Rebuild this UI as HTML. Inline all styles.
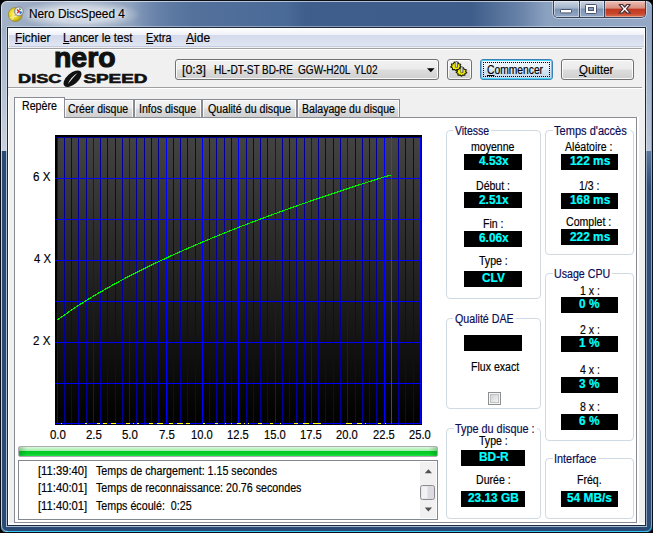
<!DOCTYPE html>
<html lang="fr"><head><meta charset="utf-8"><title>Nero DiscSpeed 4</title>
<style>
html,body{margin:0;padding:0;}
body{width:653px;height:533px;overflow:hidden;background:#000;font-family:"Liberation Sans",sans-serif;position:relative;}
.t{position:absolute;white-space:pre;font-family:"Liberation Sans",sans-serif;-webkit-text-stroke:0.18px currentColor;}
.abs{position:absolute;}
u{text-decoration:underline;text-underline-offset:1px;}
.gb{position:absolute;border:1px solid #d0dae2;border-radius:4px;box-sizing:border-box;}
.gm{position:absolute;background:#fff;height:3px;}
.bb{position:absolute;background:#000;box-sizing:border-box;}
.btn{position:absolute;box-sizing:border-box;border:1px solid #707070;border-radius:3px;background:linear-gradient(#f2f2f2 0%,#ebebeb 48%,#dddddd 52%,#cfcfcf 100%);box-shadow:inset 0 0 0 1px rgba(255,255,255,.85);}
.tab{position:absolute;box-sizing:border-box;border:1px solid #898c95;border-bottom:none;background:linear-gradient(#f2f2f2 0%,#ebebeb 48%,#dddddd 52%,#cfcfcf 100%);box-shadow:inset 1px 1px 0 rgba(255,255,255,.8),inset -1px 0 0 rgba(255,255,255,.8);}
</style></head><body>

<div class="abs" id="frame" style="left:0;top:0;width:653px;height:533px;border-radius:7px 7px 6px 6px;box-sizing:border-box;border:1px solid #0a0e16;overflow:hidden;
background:
linear-gradient(90deg,#a3b3c9 0px,#9aabc3 25px,#94a6c0 118px,#8fa3bf 130px,#7890b3 142px,#6882aa 155px,#5c79a2 172px,#54719c 192px,#4a6a97 285px,#3f5e8b 305px,#3e5d8a 470px,#6983a9 520px,#8ba1c0 545px,#95a9c6 653px);">
<div class="abs" style="left:16px;top:-2px;width:124px;height:30px;background:radial-gradient(ellipse 50% 50% at 50% 52%,rgba(255,255,255,.62) 0%,rgba(255,255,255,.5) 55%,rgba(255,255,255,.22) 80%,rgba(255,255,255,0) 100%);"></div>
<div class="abs" style="left:0;top:0;width:651px;height:531px;box-sizing:border-box;border:1px solid rgba(255,255,255,.6);border-radius:6px;"></div>
</div>
<div style="position:absolute;left:1px;top:28px;width:6px;height:123px;background:linear-gradient(#9fb1ca,#c8d1de);"></div>
<div style="position:absolute;left:1px;top:151px;width:6px;height:376px;background:#2b4a73;"></div>
<div style="position:absolute;left:1px;top:28px;width:1px;height:123px;background:rgba(255,255,255,.5);"></div>
<div style="position:absolute;left:1px;top:151px;width:1px;height:376px;background:#c4cfdd;"></div>
<div style="position:absolute;left:6px;top:27px;width:1px;height:124px;background:rgba(255,255,255,.35);"></div>
<div style="position:absolute;left:6px;top:151px;width:1px;height:376px;background:#a9b9cf;"></div>
<div style="position:absolute;left:646px;top:28px;width:6px;height:123px;background:linear-gradient(#93a8c5,#b9c6d8);"></div>
<div style="position:absolute;left:646px;top:151px;width:6px;height:376px;background:linear-gradient(#5a7aa0,#2d4c77 36px);"></div>
<div style="position:absolute;left:646px;top:27px;width:1px;height:124px;background:rgba(255,255,255,.4);"></div>
<div style="position:absolute;left:646px;top:151px;width:1px;height:376px;background:#8da2bd;"></div>
<div style="position:absolute;left:651px;top:5px;width:1px;height:523px;background:#35c4f2;"></div>
<div style="position:absolute;left:1px;top:526px;width:651px;height:6px;background:#2b4a73;border-radius:0 0 5px 5px;"></div>
<div style="position:absolute;left:6px;top:526px;width:641px;height:1px;background:#a9b9cf;"></div>
<div style="position:absolute;left:5px;top:531px;width:643px;height:1px;background:#35c4f2;"></div>
<svg class="abs" style="left:0;top:523px" width="653" height="10" viewBox="0 523 653 10"><path d="M1.5 525 Q1.5 531.5 8 531.5" fill="none" stroke="#8ccfe8" stroke-width="1"/><path d="M651.5 525 Q651.5 531.5 645 531.5" fill="none" stroke="#35c4f2" stroke-width="1"/></svg>
<div style="position:absolute;left:7px;top:26px;width:639px;height:1px;background:rgba(255,255,255,.38);"></div>
<div style="position:absolute;left:7px;top:27px;width:639px;height:499px;background:#f0f0f0;box-sizing:border-box;border:1px solid #1c2a3e;"></div>
<div style="position:absolute;left:8px;top:96px;width:1px;height:429px;background:#fff;"></div>
<div style="position:absolute;left:8px;top:523px;width:637px;height:2px;background:#fff;"></div>
<div style="position:absolute;left:637px;top:117px;width:2px;height:408px;background:#fff;"></div>
<svg class="abs" style="left:8px;top:5px" width="17" height="17" viewBox="0 0 17 17">
<defs><radialGradient id="g1" cx="40%" cy="45%" r="60%"><stop offset="0" stop-color="#fff27a"/><stop offset=".55" stop-color="#ead51f"/><stop offset="1" stop-color="#b39c14"/></radialGradient></defs>
<circle cx="7.3" cy="9.5" r="6.9" fill="url(#g1)" stroke="#8f7f1c" stroke-width=".7"/>
<path d="M7.3 9.5 L1.5 12.5 A6.6 6.6 0 0 0 5 15.6 Z" fill="#fff8b8" opacity=".55"/>
<circle cx="7.1" cy="10.2" r="2.1" fill="#f6eeb4" opacity=".8"/>
<circle cx="7.1" cy="10.2" r=".8" fill="#c9b84a"/>
<circle cx="10.9" cy="6.4" r="4.5" fill="#cfcfd6" stroke="#7b7b86" stroke-width=".8"/>
<circle cx="10.9" cy="6.4" r="3.1" fill="#fff"/>
<path d="M9 4.6 L10.9 6.2 L9.2 8.2" stroke="#e03020" stroke-width="1.5" fill="none"/>
<path d="M11.1 6.6 L13.1 7.4 L11.9 8.8" stroke="#2a70d0" stroke-width="1.6" fill="none"/>
<path d="M10.9 3.9 L12.9 4.7" stroke="#30a040" stroke-width="1.3" fill="none"/>
</svg>
<div class="t" style="left:29.22px;top:5.50px;font-size:12px;line-height:16px;color:#000;transform:scaleX(0.9841);transform-origin:0 0;text-shadow:0 0 4px rgba(255,255,255,.8),0 0 8px rgba(255,255,255,.6);">Nero DiscSpeed 4</div>
<div class="abs" style="left:553px;top:1px;width:93px;height:17px;box-sizing:border-box;border:1px solid #36445e;border-top:none;border-radius:0 0 5px 5px;overflow:hidden;box-shadow:0 0 0 1px rgba(255,255,255,.45);">
<div class="abs" style="left:0;top:0;width:25px;height:16px;background:linear-gradient(#ccd6e3 0%,#a3b4cb 45%,#7d94b4 50%,#93a8c4 100%);box-shadow:inset 0 0 0 1px rgba(255,255,255,.45);"></div>
<div class="abs" style="left:25px;top:0;width:1px;height:16px;background:#36445e;"></div>
<div class="abs" style="left:26px;top:0;width:24px;height:16px;background:linear-gradient(#ccd6e3 0%,#a3b4cb 45%,#7d94b4 50%,#93a8c4 100%);box-shadow:inset 0 0 0 1px rgba(255,255,255,.45);"></div>
<div class="abs" style="left:50px;top:0;width:1px;height:16px;background:#36445e;"></div>
<div class="abs" style="left:51px;top:0;width:41px;height:16px;background:linear-gradient(#ebc0b6 0%,#d98f80 44%,#c03a22 52%,#c8452c 78%,#db7252 100%);box-shadow:inset 0 0 0 1px rgba(255,255,255,.35);"></div>
</div>
<div style="position:absolute;left:548px;top:0px;width:99px;height:1px;background:#0a0e16;"></div>
<svg class="abs" style="left:553px;top:0" width="93" height="18" viewBox="0 0 93 18">
<rect x="7.5" y="9.5" width="11" height="3.4" rx=".6" fill="#fff" stroke="#4a5670" stroke-width="1"/>
<rect x="32.5" y="4.5" width="11" height="9" rx=".8" fill="#fff" stroke="#4a5670" stroke-width="1"/>
<rect x="35.5" y="7.5" width="5" height="3" fill="#8a9dba" stroke="#4a5670" stroke-width="1"/>
<path d="M66.2 4.5 L69.5 4.5 L71.7 7 L73.9 4.5 L77.2 4.5 L73.5 8.8 L77.4 13.2 L74 13.2 L71.7 10.6 L69.4 13.2 L66 13.2 L69.9 8.8 Z" fill="#fff" stroke="#4a3238" stroke-width="1.2" stroke-linejoin="round"/>
</svg>
<div style="position:absolute;left:8px;top:28px;width:637px;height:7px;background:linear-gradient(#ffffff,#eef1f8);"></div>
<div style="position:absolute;left:8px;top:35px;width:637px;height:11px;background:linear-gradient(#d4d9eb,#e0e5f3);"></div>
<div style="position:absolute;left:8px;top:46px;width:637px;height:1px;background:#c5cbe0;"></div>
<div style="position:absolute;left:644px;top:28px;width:1px;height:19px;background:#fff;"></div>
<div style="position:absolute;left:8px;top:28px;width:1px;height:19px;background:#fff;"></div>
<div class="t" style="left:14.62px;top:29.70px;font-size:12px;line-height:16px;color:#000;transform:scaleX(0.9842);transform-origin:0 0;"><u>F</u>ichier</div>
<div class="t" style="left:63.44px;top:29.70px;font-size:12px;line-height:16px;color:#000;transform:scaleX(0.9648);transform-origin:0 0;"><u>L</u>ancer le test</div>
<div class="t" style="left:146.19px;top:29.70px;font-size:12px;line-height:16px;color:#000;transform:scaleX(0.9111);transform-origin:0 0;"><u>E</u>xtra</div>
<div class="t" style="left:186.30px;top:29.70px;font-size:12px;line-height:16px;color:#000;transform:scaleX(1.0043);transform-origin:0 0;"><u>A</u>ide</div>
<div style="position:absolute;left:8px;top:48px;width:634px;height:1px;background:#a0a0a0;"></div>
<div style="position:absolute;left:8px;top:49px;width:635px;height:1px;background:#fff;"></div>
<div style="position:absolute;left:8px;top:87px;width:634px;height:1px;background:#a0a0a0;"></div>
<div style="position:absolute;left:8px;top:88px;width:635px;height:1px;background:#fff;"></div>
<svg class="abs" style="left:14px;top:49px" width="140" height="40" viewBox="14 49 140 40">
<text x="54.0" y="67.3" font-family="Liberation Sans, sans-serif" font-weight="bold" font-size="27.6" textLength="61.6" lengthAdjust="spacingAndGlyphs" fill="#111" stroke="#111" stroke-width="1.1">nero</text>
<text x="18.1" y="82.6" font-family="Liberation Sans, sans-serif" font-weight="bold" font-size="12" textLength="43.2" lengthAdjust="spacingAndGlyphs" fill="#111" stroke="#111" stroke-width=".55">DISC</text>
<text x="83.4" y="82.6" font-family="Liberation Sans, sans-serif" font-weight="bold" font-size="12" textLength="64" lengthAdjust="spacingAndGlyphs" fill="#111" stroke="#111" stroke-width=".55">SPEED</text>
<g transform="translate(72.5,78.7) rotate(-41)"><ellipse cx="0" cy="0" rx="10.8" ry="5.6" fill="#111"/><path d="M-7 1.0 Q0 -2.4 7.5 -0.9 Q0 -0.2 -7 1.0 Z" fill="#f0f0f0"/></g>
</svg>
<div class="btn" style="left:175px;top:59px;width:264px;height:21px;"></div>
<div class="t" style="left:181.50px;top:61.70px;font-size:12px;line-height:16px;color:#000;transform:scaleX(1.0266);transform-origin:0 0;">[0:3]</div>
<div class="t" style="left:213.85px;top:61.70px;font-size:12px;line-height:16px;color:#000;transform:scaleX(0.8474);transform-origin:0 0;">HL-DT-ST</div>
<div class="t" style="left:261.97px;top:61.70px;font-size:12px;line-height:16px;color:#000;transform:scaleX(0.8279);transform-origin:0 0;">BD-RE</div>
<div class="t" style="left:298.18px;top:61.70px;font-size:12px;line-height:16px;color:#000;transform:scaleX(0.8375);transform-origin:0 0;">GGW-H20L</div>
<div class="t" style="left:353.59px;top:61.70px;font-size:12px;line-height:16px;color:#000;transform:scaleX(0.8404);transform-origin:0 0;">YL02</div>
<svg class="abs" style="left:426px;top:67px" width="10" height="6" viewBox="0 0 10 6"><path d="M1 1.2 L8.6 1.2 L4.8 5.2 Z" fill="#000"/></svg>
<div class="btn" style="left:447px;top:59px;width:25px;height:21px;"></div>
<svg class="abs" style="left:447px;top:59px" width="25" height="21" viewBox="447 59 25 21"><polygon points="461.29,67.18 459.45,68.04 459.36,69.77 457.29,69.46 455.86,70.74 454.52,69.40 452.42,69.63 452.44,67.89 450.66,66.96 452.03,65.64 451.39,63.98 453.48,63.70 454.28,62.09 456.10,62.97 457.98,62.17 458.68,63.80 460.74,64.18 460.01,65.81" fill="#f2ee00" stroke="#151500" stroke-width="1.05" stroke-linejoin="round"/><path d="M455.3 62.2 L456.40000000000003 61.0 L457.5 62.2 L457.5 67.2 L455.3 67.2 Z" fill="#b9b9bd" stroke="#3a3a3a" stroke-width=".7"/><rect x="455.8" y="62.2" width=".7" height="4.8" fill="#ececec"/><polygon points="466.79,72.68 464.95,73.54 464.86,75.27 462.79,74.96 461.36,76.24 460.02,74.90 457.92,75.13 457.94,73.39 456.16,72.46 457.53,71.14 456.89,69.48 458.98,69.20 459.78,67.59 461.60,68.47 463.48,67.67 464.18,69.30 466.24,69.68 465.51,71.31" fill="#f2ee00" stroke="#151500" stroke-width="1.05" stroke-linejoin="round"/><path d="M460.8 67.60000000000001 L461.90000000000003 66.4 L463.0 67.60000000000001 L463.0 72.60000000000001 L460.8 72.60000000000001 Z" fill="#b9b9bd" stroke="#3a3a3a" stroke-width=".7"/><rect x="461.3" y="67.60000000000001" width=".7" height="4.8" fill="#ececec"/></svg>
<div class="btn" style="left:480px;top:59px;width:73px;height:21px;border-color:#3c7fb1;background:linear-gradient(#f2f7fb 0%,#e6f0f8 48%,#d3e4f2 52%,#c4d9ec 100%);box-shadow:inset 0 0 0 1px #48d8fb;"><div class="abs" style="left:2px;top:2px;right:2px;bottom:2px;border:1px dotted #000;"></div></div>
<div class="t" style="left:487.16px;top:61.90px;font-size:12px;line-height:16px;color:#000;transform:scaleX(0.8574);transform-origin:0 0;"><u>C</u>ommencer</div>
<div class="btn" style="left:561px;top:59px;width:73px;height:21px;"></div>
<div class="t" style="left:578.92px;top:61.90px;font-size:12px;line-height:16px;color:#000;transform:scaleX(0.9532);transform-origin:0 0;"><u>Q</u>uitter</div>
<div style="position:absolute;left:14px;top:117px;width:623px;height:406px;background:#fff;box-sizing:border-box;border:1px solid #898c95;"></div>
<div class="tab" style="left:64px;top:99px;width:70px;height:18px;"></div>
<div class="t" style="left:68.15px;top:100.60px;font-size:12px;line-height:16px;color:#000;transform:scaleX(0.8756);transform-origin:0 0;">Créer disque</div>
<div class="tab" style="left:134px;top:99px;width:68px;height:18px;"></div>
<div class="t" style="left:139.41px;top:100.60px;font-size:12px;line-height:16px;color:#000;transform:scaleX(0.8825);transform-origin:0 0;">Infos disque</div>
<div class="tab" style="left:202px;top:99px;width:95px;height:18px;"></div>
<div class="t" style="left:207.76px;top:100.60px;font-size:12px;line-height:16px;color:#000;transform:scaleX(0.8877);transform-origin:0 0;">Qualité du disque</div>
<div class="tab" style="left:297px;top:99px;width:103px;height:18px;"></div>
<div class="t" style="left:302.22px;top:100.60px;font-size:12px;line-height:16px;color:#000;transform:scaleX(0.8818);transform-origin:0 0;">Balayage du disque</div>
<div class="tab" style="left:14px;top:97px;width:51px;height:21px;background:#fff;box-shadow:none;"></div>
<div class="t" style="left:21.81px;top:98.40px;font-size:12px;line-height:16px;color:#000;transform:scaleX(0.8874);transform-origin:0 0;">Repère</div>
<svg class="abs" style="left:55px;top:135px" width="368" height="290" viewBox="55 135 368 290" shape-rendering="crispEdges"><defs><linearGradient id="cg" x1="0" y1="0" x2="0" y2="1"><stop offset="0" stop-color="#434343"/><stop offset="1" stop-color="#000"/></linearGradient></defs><rect x="55" y="135" width="367" height="290" fill="#000"/><rect x="57" y="137" width="364" height="287" fill="url(#cg)"/><rect x="57" y="137" width="1" height="287" fill="#0000ff"/><rect x="64" y="137" width="1" height="288" fill="#000098"/><rect x="71" y="137" width="1" height="288" fill="#000098"/><rect x="78" y="137" width="1" height="288" fill="#000098"/><rect x="86" y="137" width="1" height="288" fill="#000098"/><rect x="93" y="137" width="1" height="287" fill="#0000ff"/><rect x="100" y="137" width="1" height="288" fill="#000098"/><rect x="107" y="137" width="1" height="288" fill="#000098"/><rect x="115" y="137" width="1" height="288" fill="#000098"/><rect x="122" y="137" width="1" height="288" fill="#000098"/><rect x="129" y="137" width="1" height="287" fill="#0000ff"/><rect x="136" y="137" width="1" height="288" fill="#000098"/><rect x="144" y="137" width="1" height="288" fill="#000098"/><rect x="151" y="137" width="1" height="288" fill="#000098"/><rect x="158" y="137" width="1" height="288" fill="#000098"/><rect x="166" y="137" width="1" height="287" fill="#0000ff"/><rect x="173" y="137" width="1" height="288" fill="#000098"/><rect x="180" y="137" width="1" height="288" fill="#000098"/><rect x="187" y="137" width="1" height="288" fill="#000098"/><rect x="195" y="137" width="1" height="288" fill="#000098"/><rect x="202" y="137" width="1" height="287" fill="#0000ff"/><rect x="209" y="137" width="1" height="288" fill="#000098"/><rect x="216" y="137" width="1" height="288" fill="#000098"/><rect x="224" y="137" width="1" height="288" fill="#000098"/><rect x="231" y="137" width="1" height="288" fill="#000098"/><rect x="238" y="137" width="1" height="287" fill="#0000ff"/><rect x="246" y="137" width="1" height="288" fill="#000098"/><rect x="253" y="137" width="1" height="288" fill="#000098"/><rect x="260" y="137" width="1" height="288" fill="#000098"/><rect x="267" y="137" width="1" height="288" fill="#000098"/><rect x="275" y="137" width="1" height="287" fill="#0000ff"/><rect x="282" y="137" width="1" height="288" fill="#000098"/><rect x="289" y="137" width="1" height="288" fill="#000098"/><rect x="296" y="137" width="1" height="288" fill="#000098"/><rect x="304" y="137" width="1" height="288" fill="#000098"/><rect x="311" y="137" width="1" height="287" fill="#0000ff"/><rect x="318" y="137" width="1" height="288" fill="#000098"/><rect x="325" y="137" width="1" height="288" fill="#000098"/><rect x="333" y="137" width="1" height="288" fill="#000098"/><rect x="340" y="137" width="1" height="288" fill="#000098"/><rect x="347" y="137" width="1" height="287" fill="#0000ff"/><rect x="355" y="137" width="1" height="288" fill="#000098"/><rect x="362" y="137" width="1" height="288" fill="#000098"/><rect x="369" y="137" width="1" height="288" fill="#000098"/><rect x="376" y="137" width="1" height="288" fill="#000098"/><rect x="384" y="137" width="1" height="287" fill="#0000ff"/><rect x="398" y="137" width="1" height="288" fill="#000098"/><rect x="405" y="137" width="1" height="288" fill="#000098"/><rect x="413" y="137" width="1" height="288" fill="#000098"/><rect x="420" y="137" width="1" height="287" fill="#0000ff"/><rect x="55" y="423" width="367" height="1" fill="#0000ff"/><rect x="55" y="383" width="367" height="1" fill="#0000ff"/><rect x="55" y="342" width="367" height="1" fill="#0000ff"/><rect x="55" y="301" width="367" height="1" fill="#0000ff"/><rect x="55" y="260" width="367" height="1" fill="#0000ff"/><rect x="55" y="219" width="367" height="1" fill="#0000ff"/><rect x="55" y="178" width="367" height="1" fill="#0000ff"/><rect x="55" y="137" width="367" height="1" fill="#000098"/><rect x="61" y="423" width="1" height="1" fill="#ffff00"/><rect x="85" y="423" width="2" height="1" fill="#ffff00"/><rect x="97" y="423" width="3" height="1" fill="#ffff00"/><rect x="103" y="423" width="4" height="1" fill="#ffff00"/><rect x="111" y="423" width="5" height="1" fill="#ffff00"/><rect x="126" y="423" width="4" height="1" fill="#ffff00"/><rect x="133" y="423" width="1" height="1" fill="#ffff00"/><rect x="137" y="423" width="2" height="1" fill="#ffff00"/><rect x="149" y="423" width="4" height="1" fill="#ffff00"/><rect x="157" y="423" width="6" height="1" fill="#ffff00"/><rect x="169" y="423" width="4" height="1" fill="#ffff00"/><rect x="177" y="423" width="6" height="1" fill="#ffff00"/><rect x="186" y="423" width="4" height="1" fill="#ffff00"/><rect x="203" y="423" width="2" height="1" fill="#ffff00"/><rect x="215" y="423" width="3" height="1" fill="#ffff00"/><rect x="225" y="423" width="1" height="1" fill="#ffff00"/><rect x="231" y="423" width="1" height="1" fill="#ffff00"/><rect x="237" y="423" width="4" height="1" fill="#ffff00"/><rect x="244" y="423" width="1" height="1" fill="#ffff00"/><rect x="248" y="423" width="1" height="1" fill="#ffff00"/><rect x="258" y="423" width="4" height="1" fill="#ffff00"/><rect x="270" y="423" width="3" height="1" fill="#ffff00"/><rect x="280" y="423" width="1" height="1" fill="#ffff00"/><rect x="294" y="423" width="4" height="1" fill="#ffff00"/><rect x="303" y="423" width="6" height="1" fill="#ffff00"/><rect x="313" y="423" width="8" height="1" fill="#ffff00"/><rect x="346" y="423" width="6" height="1" fill="#ffff00"/><rect x="357" y="423" width="5" height="1" fill="#ffff00"/><rect x="365" y="423" width="1" height="1" fill="#ffff00"/><rect x="378" y="423" width="3" height="1" fill="#ffff00"/><rect x="385" y="423" width="1" height="1" fill="#ffff00"/><rect x="391" y="137" width="1" height="287" fill="#ff0000"/><polyline points="57.4,320.0 58.4,319.3 59.4,318.5 60.4,317.8 61.4,317.1 62.4,316.4 63.4,315.7 64.4,315.0 65.4,314.3 66.4,313.6 67.4,312.9 68.4,312.2 69.4,311.5 70.4,310.8 71.4,310.1 72.4,309.5 73.4,308.8 74.4,308.1 75.4,307.5 76.4,306.8 77.4,306.2 78.4,305.5 79.4,304.9 80.4,304.2 81.4,303.6 82.4,303.0 83.4,302.3 84.4,301.7 85.4,301.1 86.4,300.4 87.4,299.8 88.4,299.2 89.4,298.6 90.4,298.0 91.4,297.4 92.4,296.8 93.4,296.2 94.4,295.6 95.4,295.0 96.4,294.4 97.4,293.8 98.4,293.2 99.4,292.6 100.4,292.0 101.4,291.5 102.4,290.9 103.4,290.3 104.4,289.7 105.4,289.2 106.4,288.6 107.4,288.0 108.4,287.5 109.4,286.9 110.4,286.3 111.4,285.8 112.4,285.2 113.4,284.7 114.4,284.1 115.4,283.6 116.4,283.0 117.4,282.5 118.4,282.0 119.4,281.4 120.4,280.9 121.4,280.3 122.4,279.8 123.4,279.3 124.4,278.7 125.4,278.2 126.4,277.7 127.4,277.2 128.4,276.6 129.4,276.1 130.4,275.6 131.4,275.1 132.4,274.6 133.4,274.1 134.4,273.6 135.4,273.0 136.4,272.5 137.4,272.0 138.4,271.5 139.4,271.0 140.4,270.5 141.4,270.0 142.4,269.5 143.4,269.0 144.4,268.5 145.4,268.0 146.4,267.5 147.4,267.1 148.4,266.6 149.4,266.1 150.4,265.6 151.4,265.1 152.4,264.6 153.4,264.2 154.4,263.7 155.4,263.2 156.4,262.7 157.4,262.2 158.4,261.8 159.4,261.3 160.4,260.8 161.4,260.4 162.4,259.9 163.4,259.4 164.4,259.0 165.4,258.5 166.4,258.0 167.4,257.6 168.4,257.1 169.4,256.6 170.4,256.2 171.4,255.7 172.4,255.3 173.4,254.8 174.4,254.4 175.4,253.9 176.4,253.5 177.4,253.0 178.4,252.6 179.4,252.1 180.4,251.7 181.4,251.2 182.4,250.8 183.4,250.3 184.4,249.9 185.4,249.5 186.4,249.0 187.4,248.6 188.4,248.1 189.4,247.7 190.4,247.3 191.4,246.8 192.4,246.4 193.4,246.0 194.4,245.5 195.4,245.1 196.4,244.7 197.4,244.2 198.4,243.8 199.4,243.4 200.4,243.0 201.4,242.5 202.4,242.1 203.4,241.7 204.4,241.3 205.4,240.9 206.4,240.4 207.4,240.0 208.4,239.6 209.4,239.2 210.4,238.8 211.4,238.4 212.4,237.9 213.4,237.5 214.4,237.1 215.4,236.7 216.4,236.3 217.4,235.9 218.4,235.5 219.4,235.1 220.4,234.7 221.4,234.3 222.4,233.9 223.4,233.5 224.4,233.1 225.4,232.7 226.4,232.3 227.4,231.9 228.4,231.5 229.4,231.1 230.4,230.7 231.4,230.3 232.4,229.9 233.4,229.5 234.4,229.1 235.4,228.7 236.4,228.3 237.4,227.9 238.4,227.5 239.4,227.1 240.4,226.7 241.4,226.3 242.4,225.9 243.4,225.6 244.4,225.2 245.4,224.8 246.4,224.4 247.4,224.0 248.4,223.6 249.4,223.3 250.4,222.9 251.4,222.5 252.4,222.1 253.4,221.7 254.4,221.3 255.4,221.0 256.4,220.6 257.4,220.2 258.4,219.8 259.4,219.5 260.4,219.1 261.4,218.7 262.4,218.3 263.4,218.0 264.4,217.6 265.4,217.2 266.4,216.8 267.4,216.5 268.4,216.1 269.4,215.7 270.4,215.4 271.4,215.0 272.4,214.6 273.4,214.3 274.4,213.9 275.4,213.5 276.4,213.2 277.4,212.8 278.4,212.4 279.4,212.1 280.4,211.7 281.4,211.4 282.4,211.0 283.4,210.6 284.4,210.3 285.4,209.9 286.4,209.6 287.4,209.2 288.4,208.8 289.4,208.5 290.4,208.1 291.4,207.8 292.4,207.4 293.4,207.1 294.4,206.7 295.4,206.4 296.4,206.0 297.4,205.7 298.4,205.3 299.4,204.9 300.4,204.6 301.4,204.2 302.4,203.9 303.4,203.6 304.4,203.2 305.4,202.9 306.4,202.5 307.4,202.2 308.4,201.8 309.4,201.5 310.4,201.1 311.4,200.8 312.4,200.4 313.4,200.1 314.4,199.7 315.4,199.4 316.4,199.1 317.4,198.7 318.4,198.4 319.4,198.0 320.4,197.7 321.4,197.4 322.4,197.0 323.4,196.7 324.4,196.3 325.4,196.0 326.4,195.7 327.4,195.3 328.4,195.0 329.4,194.7 330.4,194.3 331.4,194.0 332.4,193.7 333.4,193.3 334.4,193.0 335.4,192.7 336.4,192.3 337.4,192.0 338.4,191.7 339.4,191.3 340.4,191.0 341.4,190.7 342.4,190.4 343.4,190.0 344.4,189.7 345.4,189.4 346.4,189.0 347.4,188.7 348.4,188.4 349.4,188.1 350.4,187.7 351.4,187.4 352.4,187.1 353.4,186.8 354.4,186.4 355.4,186.1 356.4,185.8 357.4,185.5 358.4,185.1 359.4,184.8 360.4,184.5 361.4,184.2 362.4,183.9 363.4,183.5 364.4,183.2 365.4,182.9 366.4,182.6 367.4,182.3 368.4,181.9 369.4,181.6 370.4,181.3 371.4,181.0 372.4,180.7 373.4,180.4 374.4,180.1 375.4,179.7 376.4,179.4 377.4,179.1 378.4,178.8 379.4,178.5 380.4,178.2 381.4,177.9 382.4,177.5 383.4,177.2 384.4,176.9 385.4,176.6 386.4,176.3 387.4,176.0 388.4,175.7 389.4,175.4 390.4,175.1" fill="none" stroke="#00f000" stroke-width="1.15" shape-rendering="crispEdges"/></svg>
<div class="t" style="left:33.20px;top:169.00px;font-size:12px;line-height:16px;color:#000;transform:scaleX(0.9635);transform-origin:0 0;">6 X</div>
<div class="t" style="left:33.56px;top:251.00px;font-size:12px;line-height:16px;color:#000;transform:scaleX(0.9429);transform-origin:0 0;">4 X</div>
<div class="t" style="left:33.20px;top:333.00px;font-size:12px;line-height:16px;color:#000;transform:scaleX(0.9635);transform-origin:0 0;">2 X</div>
<div class="t" style="left:50.40px;top:427.00px;font-size:12px;line-height:16px;color:#000;transform:scaleX(0.9550);transform-origin:0 0;">0.0</div>
<div class="t" style="left:86.40px;top:427.00px;font-size:12px;line-height:16px;color:#000;transform:scaleX(0.9550);transform-origin:0 0;">2.5</div>
<div class="t" style="left:122.40px;top:427.00px;font-size:12px;line-height:16px;color:#000;transform:scaleX(0.9550);transform-origin:0 0;">5.0</div>
<div class="t" style="left:159.40px;top:427.00px;font-size:12px;line-height:16px;color:#000;transform:scaleX(0.9550);transform-origin:0 0;">7.5</div>
<div class="t" style="left:190.76px;top:427.00px;font-size:12px;line-height:16px;color:#000;transform:scaleX(0.9300);transform-origin:0 0;">10.0</div>
<div class="t" style="left:226.81px;top:427.00px;font-size:12px;line-height:16px;color:#000;transform:scaleX(0.9300);transform-origin:0 0;">12.5</div>
<div class="t" style="left:263.76px;top:427.00px;font-size:12px;line-height:16px;color:#000;transform:scaleX(0.9300);transform-origin:0 0;">15.0</div>
<div class="t" style="left:299.81px;top:427.00px;font-size:12px;line-height:16px;color:#000;transform:scaleX(0.9300);transform-origin:0 0;">17.5</div>
<div class="t" style="left:335.87px;top:427.00px;font-size:12px;line-height:16px;color:#000;transform:scaleX(0.9300);transform-origin:0 0;">20.0</div>
<div class="t" style="left:372.93px;top:427.00px;font-size:12px;line-height:16px;color:#000;transform:scaleX(0.9300);transform-origin:0 0;">22.5</div>
<div class="t" style="left:408.87px;top:427.00px;font-size:12px;line-height:16px;color:#000;transform:scaleX(0.9300);transform-origin:0 0;">25.0</div>
<div style="position:absolute;left:18px;top:446px;width:420px;height:11px;box-sizing:border-box;border:1px solid #b0aab2;border-radius:2px;background:linear-gradient(90deg,rgba(0,80,0,.25) 0px,rgba(0,80,0,0) 8px,rgba(0,80,0,0) 410px,rgba(0,80,0,.25) 418px),linear-gradient(#dbf9db 0px,#a4eeac 3.6px,#02c824 4.2px,#08d02c 7px,#22e044 9px);"></div>
<div style="position:absolute;left:18px;top:460px;width:420px;height:60px;box-sizing:border-box;border:1px solid #828790;background:#fff;"></div>
<div style="position:absolute;left:420px;top:462px;width:16px;height:56px;background:#f1f1f1;"></div>
<svg class="abs" style="left:420px;top:462px" width="16" height="57" viewBox="420 462 16 57"><path d="M424.8 473.2 L428.4 469.2 L432 473.2 Z" fill="#505050"/><path d="M424.8 507.6 L428.4 511.6 L432 507.6 Z" fill="#505050"/><rect x="420.5" y="485.5" width="14" height="14" rx="2" fill="#dcdce0" stroke="#8c8c92"/><rect x="421.5" y="486.5" width="6" height="12" fill="#f2f2f4"/></svg>
<div class="t" style="left:37.58px;top:463.20px;font-size:12px;line-height:16px;color:#000;transform:scaleX(0.9360);transform-origin:0 0;">[11:39:40]</div>
<div class="t" style="left:96.08px;top:463.20px;font-size:12px;line-height:16px;color:#000;transform:scaleX(0.8900);transform-origin:0 0;">Temps de chargement: 1.15 secondes</div>
<div class="t" style="left:37.58px;top:480.35px;font-size:12px;line-height:16px;color:#000;transform:scaleX(0.9360);transform-origin:0 0;">[11:40:01]</div>
<div class="t" style="left:96.08px;top:480.35px;font-size:12px;line-height:16px;color:#000;transform:scaleX(0.8900);transform-origin:0 0;">Temps de reconnaissance: 20.76 secondes</div>
<div class="t" style="left:37.58px;top:497.50px;font-size:12px;line-height:16px;color:#000;transform:scaleX(0.9360);transform-origin:0 0;">[11:40:01]</div>
<div class="t" style="left:96.08px;top:497.50px;font-size:12px;line-height:16px;color:#000;transform:scaleX(0.8900);transform-origin:0 0;">Temps écoulé:  0:25</div>
<div class="gb" style="left:446px;top:130px;width:95px;height:169px;"></div>
<div class="gm" style="left:452.7px;top:129px;width:38.6px;"></div>
<div class="t" style="left:454.59px;top:123.10px;font-size:12px;line-height:16px;color:#0c0c54;transform:scaleX(0.8727);transform-origin:0 0;">Vitesse</div>
<div class="t" style="left:470.88px;top:139.00px;font-size:12px;line-height:16px;color:#000;transform:scaleX(0.8800);transform-origin:0 0;">moyenne</div>
<div class="bb" style="left:464.2px;top:153.6px;width:58px;height:16.2px;"></div>
<div class="t" style="left:478.54px;top:153.20px;font-size:12px;line-height:16px;color:#00ffff;transform:scaleX(0.9900);transform-origin:0 0;font-weight:bold;">4.53x</div>
<div class="t" style="left:476.48px;top:178.20px;font-size:12px;line-height:16px;color:#000;transform:scaleX(0.8800);transform-origin:0 0;">Début :</div>
<div class="bb" style="left:464.2px;top:192.3px;width:58px;height:16.2px;"></div>
<div class="t" style="left:478.54px;top:191.90px;font-size:12px;line-height:16px;color:#00ffff;transform:scaleX(0.9900);transform-origin:0 0;font-weight:bold;">2.51x</div>
<div class="t" style="left:482.73px;top:216.10px;font-size:12px;line-height:16px;color:#000;transform:scaleX(0.8800);transform-origin:0 0;">Fin :</div>
<div class="bb" style="left:464.2px;top:230.5px;width:58px;height:16.2px;"></div>
<div class="t" style="left:478.54px;top:230.10px;font-size:12px;line-height:16px;color:#00ffff;transform:scaleX(0.9900);transform-origin:0 0;font-weight:bold;">6.06x</div>
<div class="t" style="left:478.62px;top:253.00px;font-size:12px;line-height:16px;color:#000;transform:scaleX(0.8800);transform-origin:0 0;">Type :</div>
<div class="bb" style="left:464.2px;top:270.5px;width:58px;height:16.2px;"></div>
<div class="t" style="left:481.96px;top:270.10px;font-size:12px;line-height:16px;color:#00ffff;transform:scaleX(0.9900);transform-origin:0 0;font-weight:bold;">CLV</div>
<div class="gb" style="left:545px;top:130px;width:89px;height:125px;"></div>
<div class="gm" style="left:552.6px;top:129px;width:77.2px;"></div>
<div class="t" style="left:554.37px;top:123.10px;font-size:12px;line-height:16px;color:#0c0c54;transform:scaleX(0.9212);transform-origin:0 0;">Temps d'accès</div>
<div class="t" style="left:564.73px;top:139.00px;font-size:12px;line-height:16px;color:#000;transform:scaleX(0.8800);transform-origin:0 0;">Aléatoire :</div>
<div class="bb" style="left:560.8px;top:153.5px;width:57.3px;height:16.2px;"></div>
<div class="t" style="left:569.50px;top:153.10px;font-size:12px;line-height:16px;color:#00ffff;transform:scaleX(0.9900);transform-origin:0 0;font-weight:bold;">122 ms</div>
<div class="t" style="left:579.33px;top:178.20px;font-size:12px;line-height:16px;color:#000;transform:scaleX(0.8800);transform-origin:0 0;">1/3 :</div>
<div class="bb" style="left:560.8px;top:192.6px;width:57.3px;height:16.2px;"></div>
<div class="t" style="left:569.50px;top:192.20px;font-size:12px;line-height:16px;color:#00ffff;transform:scaleX(0.9900);transform-origin:0 0;font-weight:bold;">168 ms</div>
<div class="t" style="left:565.81px;top:214.00px;font-size:12px;line-height:16px;color:#000;transform:scaleX(0.8800);transform-origin:0 0;">Complet :</div>
<div class="bb" style="left:560.8px;top:228.9px;width:57.3px;height:16.2px;"></div>
<div class="t" style="left:569.50px;top:228.50px;font-size:12px;line-height:16px;color:#00ffff;transform:scaleX(0.9900);transform-origin:0 0;font-weight:bold;">222 ms</div>
<div class="gb" style="left:545px;top:273px;width:89px;height:168px;"></div>
<div class="gm" style="left:552.6px;top:272px;width:59.7px;"></div>
<div class="t" style="left:553.82px;top:266.10px;font-size:12px;line-height:16px;color:#0c0c54;transform:scaleX(0.8876);transform-origin:0 0;">Usage CPU</div>
<div class="t" style="left:579.62px;top:282.50px;font-size:12px;line-height:16px;color:#000;transform:scaleX(0.8800);transform-origin:0 0;">1 x :</div>
<div class="bb" style="left:560.8px;top:296.6px;width:57.3px;height:16.2px;"></div>
<div class="t" style="left:579.41px;top:296.20px;font-size:12px;line-height:16px;color:#00ffff;transform:scaleX(0.9900);transform-origin:0 0;font-weight:bold;">0 %</div>
<div class="t" style="left:579.62px;top:321.50px;font-size:12px;line-height:16px;color:#000;transform:scaleX(0.8800);transform-origin:0 0;">2 x :</div>
<div class="bb" style="left:560.8px;top:335.8px;width:57.3px;height:16.2px;"></div>
<div class="t" style="left:579.41px;top:335.40px;font-size:12px;line-height:16px;color:#00ffff;transform:scaleX(0.9900);transform-origin:0 0;font-weight:bold;">1 %</div>
<div class="t" style="left:579.62px;top:362.20px;font-size:12px;line-height:16px;color:#000;transform:scaleX(0.8800);transform-origin:0 0;">4 x :</div>
<div class="bb" style="left:560.8px;top:376.7px;width:57.3px;height:16.2px;"></div>
<div class="t" style="left:579.41px;top:376.30px;font-size:12px;line-height:16px;color:#00ffff;transform:scaleX(0.9900);transform-origin:0 0;font-weight:bold;">3 %</div>
<div class="t" style="left:579.62px;top:399.10px;font-size:12px;line-height:16px;color:#000;transform:scaleX(0.8800);transform-origin:0 0;">8 x :</div>
<div class="bb" style="left:560.8px;top:413.6px;width:57.3px;height:16.2px;"></div>
<div class="t" style="left:579.41px;top:413.20px;font-size:12px;line-height:16px;color:#00ffff;transform:scaleX(0.9900);transform-origin:0 0;font-weight:bold;">6 %</div>
<div class="gb" style="left:446px;top:318px;width:95px;height:91px;"></div>
<div class="gm" style="left:453.0px;top:317px;width:62.8px;"></div>
<div class="t" style="left:454.56px;top:311.10px;font-size:12px;line-height:16px;color:#0c0c54;transform:scaleX(0.8892);transform-origin:0 0;">Qualité DAE</div>
<div class="bb" style="left:464.4px;top:334.7px;width:57.7px;height:16.2px;"></div>
<div class="t" style="left:470.74px;top:359.40px;font-size:12px;line-height:16px;color:#000;transform:scaleX(0.8800);transform-origin:0 0;">Flux exact</div>
<div style="position:absolute;left:488px;top:392px;width:13px;height:13px;box-sizing:border-box;border:1px solid #8e8f8f;background:#f4f4f4;box-shadow:inset 0 0 0 1px #f4f4f4,inset 0 0 0 2px #c0c4c8;"><div class="abs" style="left:2px;top:2px;width:7px;height:7px;background:linear-gradient(135deg,#d2d4d6,#f2f2f2);"></div></div>
<div class="gb" style="left:446px;top:428px;width:95px;height:91px;"></div>
<div class="gm" style="left:453.6px;top:427px;width:83.4px;"></div>
<div class="t" style="left:455.37px;top:421.10px;font-size:12px;line-height:16px;color:#0c0c54;transform:scaleX(0.9037);transform-origin:0 0;">Type du disque :</div>
<div class="t" style="left:478.62px;top:433.20px;font-size:12px;line-height:16px;color:#000;transform:scaleX(0.8800);transform-origin:0 0;">Type :</div>
<div class="bb" style="left:461.4px;top:449.7px;width:64px;height:16.2px;"></div>
<div class="t" style="left:478.75px;top:449.30px;font-size:12px;line-height:16px;color:#00ffff;transform:scaleX(0.9900);transform-origin:0 0;font-weight:bold;">BD-R</div>
<div class="t" style="left:476.39px;top:471.90px;font-size:12px;line-height:16px;color:#000;transform:scaleX(0.8800);transform-origin:0 0;">Durée :</div>
<div class="bb" style="left:461.4px;top:490.7px;width:64px;height:16.2px;"></div>
<div class="t" style="left:468.18px;top:490.30px;font-size:12px;line-height:16px;color:#00ffff;transform:scaleX(0.9900);transform-origin:0 0;font-weight:bold;">23.13 GB</div>
<div class="gb" style="left:545px;top:458px;width:89px;height:61px;"></div>
<div class="gm" style="left:552.6px;top:457px;width:45.8px;"></div>
<div class="t" style="left:553.58px;top:451.10px;font-size:12px;line-height:16px;color:#0c0c54;transform:scaleX(0.9067);transform-origin:0 0;">Interface</div>
<div class="t" style="left:576.68px;top:471.80px;font-size:12px;line-height:16px;color:#000;transform:scaleX(0.8800);transform-origin:0 0;">Fréq.</div>
<div class="bb" style="left:560.8px;top:490.8px;width:57.3px;height:16.2px;"></div>
<div class="t" style="left:567.20px;top:490.40px;font-size:12px;line-height:16px;color:#00ffff;transform:scaleX(0.9900);transform-origin:0 0;font-weight:bold;">54 MB/s</div>
</body></html>
